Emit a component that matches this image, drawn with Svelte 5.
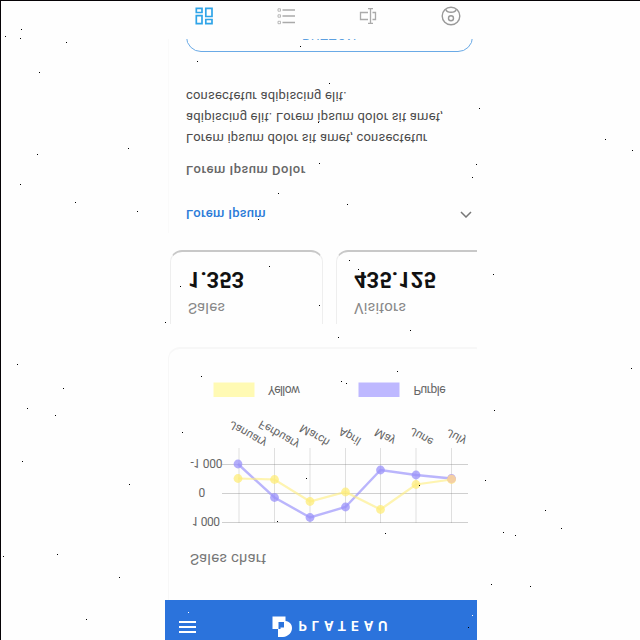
<script>
  const months = ['January', 'Ferbuary', 'March', 'April', 'May', 'June', 'July'];
  const monthAt = [
    [232, 219.5], [261.5, 220], [302.5, 216], [341.5, 213], [377.5, 212], [412.5, 213], [449, 211.5]
  ];
  const gridX = [239, 274.5, 310, 345.5, 380.5, 416, 451.5];
  const purple = [[238, 176], [274.5, 142.5], [310, 122.5], [345.5, 133], [380.5, 170], [416, 165], [451.5, 161.5]];
  const yellow = [[238, 161.5], [274.5, 160.5], [310, 138.5], [345.5, 148], [380.5, 130.5], [416, 155.5], [451.5, 160.5]];
  const path = (pts) => pts.map((p) => p.join(',')).join(' ');
  const stats = [
    { label: 'Sales', value: '1.353', lw: 37, vw: 56 },
    { label: 'Visitors', value: '435.125', lw: 52, vw: 82 }
  ];
  const dots = [
    [21,29],[5,36],[20,38],[66,42],[39,72],[128,148],[37,154],[20,184],[75,202],[137,211],
    [17,364],[63,388],[27,408],[55,415],[22,461],[129,484],[3,556],[57,554],[119,577],[86,619],
    [479,108],[605,139],[632,150],[493,274],[631,368],[494,410],[485,480],[545,510],[503,532],
    [515,535],[561,528],[491,584],[530,586],[300,46],[197,61],[329,83],[319,163],[476,164],
    [472,177],[278,193],[347,204],[258,219],[318,122],[269,266],[180,286],[349,260],[358,269],
    [319,305],[165,322],[410,330],[338,337],[201,376],[397,371],[341,381],[346,383],[182,432],
    [306,478],[419,485],[277,521],[385,533],[468,627]
  ];
  const lightDots = [[188, 612], [472, 615]];
</script>

<div class="stage">
  <main class="phone">
    <header>
      <svg class="menu" width="17" height="12" viewBox="0 0 17 12"><path d="M0 1H17M0 6H17M0 11H17" stroke="#fff" stroke-width="1.8" /></svg>
      <svg class="brand" width="120" height="24" viewBox="0 0 120 24">
        <path fill="#fff" fill-rule="evenodd" d="M7 0H11C16.500 0.500 20 4.500 20 9C20 13 17.500 15.500 13.500 16V20.500H0.500V8H6V0ZM6.500 8V15H12V9.500H8.500V8Z" />
        <text x="26.500" y="16.500" textLength="89" lengthAdjust="spacing">PLATEAU</text>
      </svg>
    </header>

    <section class="chart">
      <h2>Sales chart</h2>
      <svg width="312" height="202" viewBox="165 90 312 202">
        <g stroke="#777" stroke-opacity=".35" stroke-width="1">
          <path d="M222 117.500H468M222 146.500H468M222 175.500H468" />
          {#each gridX as x}<path d="M{x} 117V192" stroke-opacity=".23" />{/each}
        </g>
        <g class="axis">
          <text x="192" y="123" textLength="28">1 000</text>
          <text x="198.500" y="152" textLength="6">0</text>
          <text x="190.500" y="181" textLength="32">-1 000</text>
        </g>
        <g fill="#9a92fa" stroke="#9a92fa">
          <polyline points={path(purple)} fill="none" stroke-width="2.400" opacity=".68" />
          {#each purple as p}<circle cx={p[0]} cy={p[1]} r="4.400" stroke="none" opacity=".75" />{/each}
        </g>
        <g fill="#fdec78" stroke="#fdee80">
          <polyline points={path(yellow)} fill="none" stroke-width="2.200" opacity=".62" />
          {#each yellow as p}<circle cx={p[0]} cy={p[1]} r="4.400" stroke="none" opacity=".75" />{/each}
        </g>
        <circle cx="451.500" cy="161" r="4.400" fill="#f8c9a8" opacity=".7" />
        <g class="axis">
          {#each months as m, i}
            <text class="month" transform="translate({monthAt[i][0]} {monthAt[i][1]}) rotate(-30)">{m}</text>
          {/each}
          <rect x="213.500" y="243" width="41" height="14.500" fill="#fffab4" />
          <text x="268" y="254" textLength="32">Yellow</text>
          <rect x="358.500" y="243" width="41" height="14.500" fill="#beb8ff" />
          <text x="413.500" y="254" textLength="32">Purple</text>
        </g>
      </svg>
    </section>

    <section class="stats">
      {#each stats as s}
        <article>
          <svg width="120" height="72">
            <text class="label" x="18" y="21" textLength={s.lw}>{s.label}</text>
            <text class="value" x="18" y="52" textLength={s.vw}>{s.value}</text>
          </svg>
        </article>
      {/each}
    </section>

    <section class="accordion">
      <div class="top">
        <span>Lorem Ipsum</span>
        <svg width="12" height="7" viewBox="0 0 12 7"><path d="M1 6L6 1L11 6" fill="none" stroke="#777" stroke-width="1.500" /></svg>
      </div>
      <h3>Lorem Ipsum Dolor</h3>
      <p>
        <span>Lorem ipsum dolor sit amet, consectetur</span>
        <span>adipiscing elit. Lorem ipsum dolor sit amet,</span>
        <span>consectetur adipiscing elit.</span>
      </p>
      <button>BUTTON</button>
    </section>

    <nav>
      <svg width="18" height="18" viewBox="0 0 18 18" fill="none" stroke="#2fa4e8" stroke-width="1.700">
        <path d="M1.300 1.300H7V9.300H1.300ZM1.300 12.500H7V16.700H1.300ZM10.800 1.300H17V5.500H10.800ZM10.800 8.500H17V16.700H10.800Z" />
      </svg>
      <svg width="18" height="18" viewBox="0 0 18 18" fill="none" stroke="#aaa">
        <path d="M5.500 2.500H18M5.500 9H18M5.500 15H18" stroke-width="1.400" />
        <path d="M1 1.300H3.500V3.700H1ZM1 7.800H3.500V10.200H1ZM1 13.800H3.500V16.200H1Z" stroke-width=".8" />
      </svg>
      <svg width="18" height="18" viewBox="0 0 18 18" fill="none" stroke="#aaa" stroke-width="1.300">
        <path d="M9 5.500H1.500V12.500H9M13.500 5.500H16.500V12.500H13.500M11.500 2V16M9 1.700H14M9 16.300H14" />
      </svg>
      <svg class="profile" width="20" height="20" viewBox="0 0 20 20" fill="none" stroke="#999" stroke-width="1.400">
        <circle cx="10" cy="10" r="8.800" /><circle cx="10" cy="7.800" r="2.500" /><path d="M4.800 16.500C6 12.800 14 12.800 15.200 16.500" />
      </svg>
    </nav>
  </main>
</div>

<svg class="specks" width="640" height="640" shape-rendering="crispEdges">
  {#each dots as d}<rect x={d[0]} y={d[1]} width="1" height="1" />{/each}
  {#each lightDots as d}<rect x={d[0]} y={d[1]} width="1" height="1" fill="#fff" />{/each}
</svg>

<style>
  :global(body) { overflow: hidden; background: #fefefe; }
  .stage {
    box-sizing: border-box; width: 640px; height: 640px; padding-left: 164px;
    border-left: 1px solid #060206; border-bottom: 1px solid #060206;
    background: #fefefe; transform: scaleY(-1); overflow: hidden;
    font-family: Roboto, "Liberation Sans", sans-serif;
  }
  .phone { width: 312px; height: 639px; display: flex; flex-direction: column; overflow: hidden; }
  header { height: 40px; flex: none; background: #2b73dc; display: flex; align-items: flex-start; }
  .menu { margin: 7px 0 0 14px; }
  .brand { margin: 3px 0 0 76px; }
  .brand text { font: 700 13px Inter, Roboto, sans-serif; fill: #fff; }
  .chart {
    box-sizing: border-box; height: 253px; flex: none; margin: 0 -10px 0 3px;
    border: solid #f7f7f7; border-width: 0 1px 2px; border-radius: 0 0 12px 12px;
  }
  h2 { box-sizing: border-box; height: 50px; margin: 0; padding: 32px 0 0 21px; font-size: 15px; line-height: 18px; font-weight: 400; color: #777; letter-spacing: .15px; }
  .chart > svg { display: block; margin-left: -4px; }
  .axis text { font: 12px Roboto, sans-serif; fill: #666; }
  .axis .month { font-size: 11.5px; }
  .stats { display: flex; gap: 13px; margin: 23px 0 0 5px; height: 74px; flex: none; }
  article { box-sizing: border-box; width: 153px; flex: none; border: 1px solid #eee; border-top: 0; border-bottom: 2px solid #c8c8c8; border-radius: 0 0 12px 12px; }
  article svg { display: block; margin-left: -1px; }
  .label { font: 15px Roboto, sans-serif; fill: #888; }
  .value { font: 700 22px Roboto, sans-serif; fill: #111; }
  .accordion { margin: 17px 0 0 3px; padding: 10px 4px 0 17px; border-left: 1px solid #fafafa; height: 194px; box-sizing: border-box; flex: none; overflow: hidden; }
  .top { height: 16px; display: flex; align-items: center; justify-content: space-between; font-size: 13px; font-weight: 500; color: #2b7bd8; letter-spacing: .3px; }
  .top svg { margin-right: 1px; }
  h3 { margin: 29px 0 0; height: 16px; line-height: 16px; font-size: 13px; font-weight: 500; color: #666; letter-spacing: .52px; }
  p { margin: 13px 0 0; line-height: 21px; font-size: 13px; color: #4a4a4a; white-space: nowrap; }
  p span { display: block; letter-spacing: .2px; }
  button { box-sizing: border-box; display: block; width: 287px; height: 32px; margin-top: 34px; padding: 0; border: 1px solid #6aaae6; border-radius: 15px; background: none; color: #5b9fe0; font: 13px Roboto, sans-serif; letter-spacing: .8px; }
  nav { flex: 1; display: flex; align-items: flex-start; background: #fefefe; padding: 14px 16px 0 30px; justify-content: space-between; }
  .profile { margin-top: -1px; }
  .specks { position: absolute; left: 0; top: 0; }
</style>
